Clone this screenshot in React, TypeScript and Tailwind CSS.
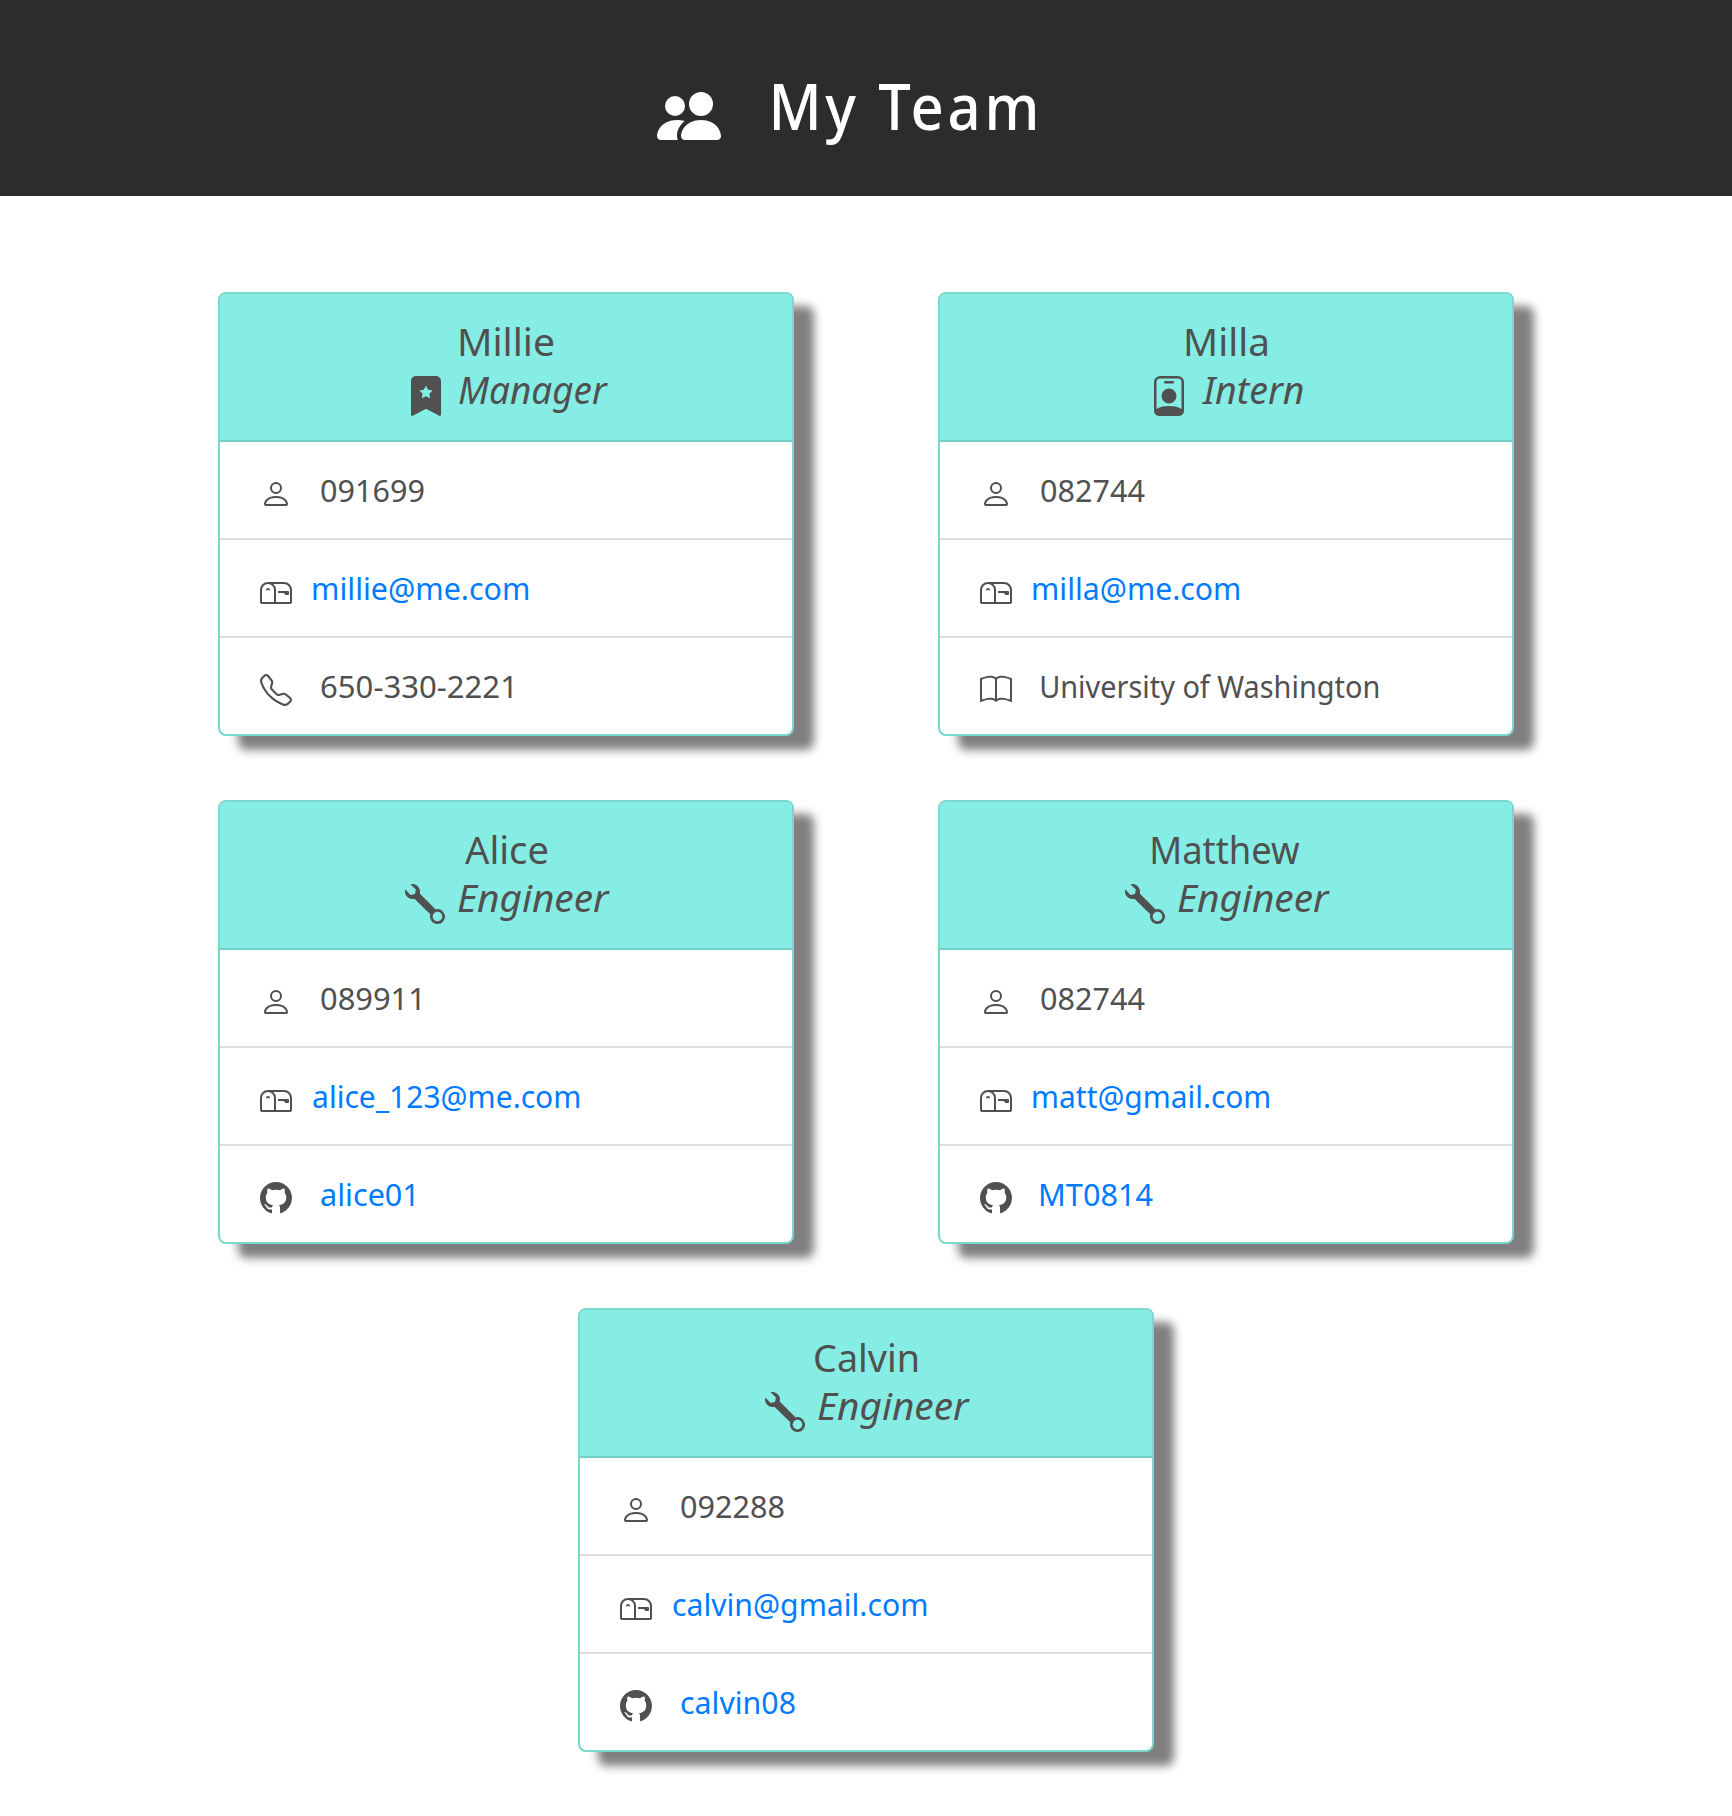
import { useLayoutEffect, useRef } from "react";
import type { IconType } from "react-icons";
import {
  BsBook,
  BsBookmarkStarFill,
  BsGithub,
  BsMailbox,
  BsPeopleFill,
  BsPerson,
  BsPersonBadge,
  BsTelephone,
  BsWrench,
} from "react-icons/bs";

/** One line of text whose visible glyphs are condensed to span exactly `width` pixels. */
function FitText({ text, width, className = "" }: { text: string; width: number; className?: string }) {
  const ref = useRef<HTMLSpanElement>(null);
  useLayoutEffect(() => {
    const el = ref.current;
    const ctx = document.createElement("canvas").getContext("2d");
    if (!el || !ctx) return;
    const cs = getComputedStyle(el);
    ctx.font = `${cs.fontStyle} ${cs.fontWeight} ${cs.fontSize} ${cs.fontFamily}`;
    if (cs.letterSpacing !== "normal") (ctx as any).letterSpacing = cs.letterSpacing;
    const m = ctx.measureText(text);
    const left = m.actualBoundingBoxLeft;
    const scale = width / (left + m.actualBoundingBoxRight);
    el.style.transform = `translateX(${left * scale}px) scaleX(${scale})`;
  }, [text, width]);
  return (
    <span className="block whitespace-nowrap" style={{ width }}>
      <span ref={ref} className={`inline-block origin-left ${className}`}>
        {text}
      </span>
    </span>
  );
}

type Line = { icon: IconType; text: string; width: number; link?: boolean };
type Member = {
  name: string;
  nameWidth: number;
  role: string;
  roleWidth: number;
  roleIcon: IconType;
  lines: Line[];
};

const team: Member[] = [
  {
    name: "Millie",
    nameWidth: 93,
    role: "Manager",
    roleWidth: 149,
    roleIcon: BsBookmarkStarFill,
    lines: [
      { icon: BsPerson, text: "091699", width: 103 },
      { icon: BsMailbox, text: "millie@me.com", width: 215, link: true },
      { icon: BsTelephone, text: "650-330-2221", width: 191 },
    ],
  },
  {
    name: "Milla",
    nameWidth: 81,
    role: "Intern",
    roleWidth: 101,
    roleIcon: BsPersonBadge,
    lines: [
      { icon: BsPerson, text: "082744", width: 104 },
      { icon: BsMailbox, text: "milla@me.com", width: 206, link: true },
      { icon: BsBook, text: "University of Washington", width: 337 },
    ],
  },
  {
    name: "Alice",
    nameWidth: 82,
    role: "Engineer",
    roleWidth: 152,
    roleIcon: BsWrench,
    lines: [
      { icon: BsPerson, text: "089911", width: 99 },
      { icon: BsMailbox, text: "alice_123@me.com", width: 266, link: true },
      { icon: BsGithub, text: "alice01", width: 93, link: true },
    ],
  },
  {
    name: "Matthew",
    nameWidth: 148,
    role: "Engineer",
    roleWidth: 152,
    roleIcon: BsWrench,
    lines: [
      { icon: BsPerson, text: "082744", width: 104 },
      { icon: BsMailbox, text: "matt@gmail.com", width: 236, link: true },
      { icon: BsGithub, text: "MT0814", width: 112, link: true },
    ],
  },
  {
    name: "Calvin",
    nameWidth: 102,
    role: "Engineer",
    roleWidth: 152,
    roleIcon: BsWrench,
    lines: [
      { icon: BsPerson, text: "092288", width: 103 },
      { icon: BsMailbox, text: "calvin@gmail.com", width: 253, link: true },
      { icon: BsGithub, text: "calvin08", width: 114, link: true },
    ],
  },
];

function Card({ member }: { member: Member }) {
  const RoleIcon = member.roleIcon;
  return (
    <article className="h-[444px] w-[576px] rounded-lg border-2 border-[#7ad7ce] bg-white shadow-[20px_14px_10px_rgba(0,0,0,0.5)]">
      <header className="flex h-[148px] flex-col items-center rounded-t-md border-b-2 border-[#74cfc7] bg-[#85ede4] pt-[23px] text-[39px] leading-[48px]">
        <FitText text={member.name} width={member.nameWidth} />
        <div className={`flex gap-[13px] ${member.role === "Intern" ? "pr-px" : "pl-0.5"}`}>
          <RoleIcon className="mt-[11px] size-10" />
          <FitText text={member.role} width={member.roleWidth} className="italic" />
        </div>
      </header>
      <ul className="divide-y-2 divide-[#dfdfdf]">
        {member.lines.map(({ icon: Icon, text, width, link }, i) => (
          <li
            key={i}
            className={`flex px-10 text-[31.5px] leading-[96px] ${i === member.lines.length - 1 ? "h-24" : "h-[98px]"}`}
          >
            <Icon className={`mt-9 size-8 shrink-0 ${Icon === BsMailbox ? "mr-[21px]" : "mr-[29px]"}`} />
            {link ? (
              <a href="#" className="text-[#007bff]">
                <FitText text={text} width={width} />
              </a>
            ) : (
              <FitText text={text} width={width} />
            )}
          </li>
        ))}
      </ul>
    </article>
  );
}

export default function App() {
  return (
    <div className="min-h-[1816px] w-full bg-white font-['Noto_Sans',sans-serif] text-[#505050]">
      <header className="flex h-[196px] justify-center gap-[52px] bg-[#2c2c2c] pr-[41px] pt-[74px] text-[63px] leading-none text-white">
        <BsPeopleFill className="mt-[10px] size-16" />
        <h1 className="font-medium">
          <FitText text="My Team" width={262} className="tracking-[4px]" />
        </h1>
      </header>
      <main className="mx-auto flex w-[1440px] flex-wrap justify-center gap-x-36 gap-y-16 pt-24">
        {team.map((m) => (
          <Card key={m.name} member={m} />
        ))}
      </main>
    </div>
  );
}
